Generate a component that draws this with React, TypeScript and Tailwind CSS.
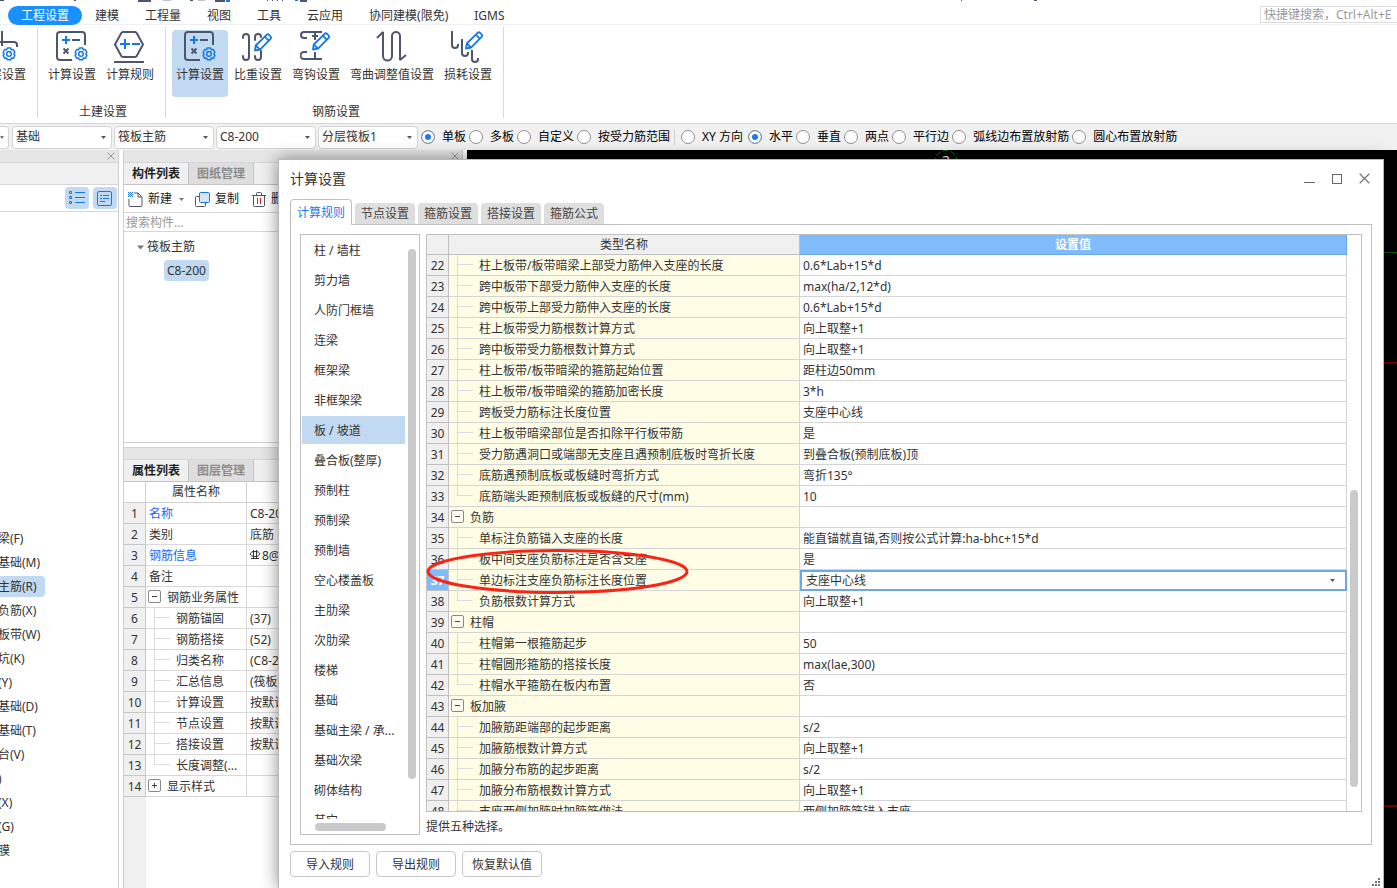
import { useState } from 'react';
import type { ReactNode } from 'react';
import clsx from 'clsx';

const INK = '#4d566b';
const BLUE = '#1677e8';

const menu = ['工程设置', '建模', '工程量', '视图', '工具', '云应用', '协同建模(限免)', 'IGMS'];

const selectors = [
  { label: '楼层', value: '基础' },
  { label: '构件类型', value: '筏板主筋' },
  { label: '构件', value: 'C8-200' },
  { label: '分层', value: '分层筏板1' },
];

const rangeModes = ['单板', '多板', '自定义', '按受力筋范围'];
const directionModes = ['XY 方向', '水平', '垂直', '两点', '平行边', '弧线边布置放射筋', '圆心布置放射筋'];

const navItems = [
  '梁(F)', '基础(M)', '主筋(R)', '负筋(X)', '板带(W)', '坑(K)', '(Y)',
  '基础(D)', '基础(T)', '台(V)', ')', '(X)', '(G)', '膜',
];

type Kind = 'plain' | 'link' | 'open' | 'closed' | 'child' | 'last';
type Row = { no: number; name: string; value?: string; kind: Kind };

const properties: Row[] = [
  { no: 1, name: '名称', value: 'C8-200', kind: 'link' },
  { no: 2, name: '类别', value: '底筋', kind: 'plain' },
  { no: 3, name: '钢筋信息', value: '8@200', kind: 'link' },
  { no: 4, name: '备注', kind: 'plain' },
  { no: 5, name: '钢筋业务属性', kind: 'open' },
  { no: 6, name: '钢筋锚固', value: '(37)', kind: 'child' },
  { no: 7, name: '钢筋搭接', value: '(52)', kind: 'child' },
  { no: 8, name: '归类名称', value: '(C8-200)', kind: 'child' },
  { no: 9, name: '汇总信息', value: '(筏板)', kind: 'child' },
  { no: 10, name: '计算设置', value: '按默认', kind: 'child' },
  { no: 11, name: '节点设置', value: '按默认', kind: 'child' },
  { no: 12, name: '搭接设置', value: '按默认', kind: 'child' },
  { no: 13, name: '长度调整(...', kind: 'last' },
  { no: 14, name: '显示样式', kind: 'closed' },
];

const dialogTabs = ['计算规则', '节点设置', '箍筋设置', '搭接设置', '箍筋公式'];

const categories = [
  '柱 / 墙柱', '剪力墙', '人防门框墙', '连梁', '框架梁', '非框架梁', '板 / 坡道', '叠合板(整厚)',
  '预制柱', '预制梁', '预制墙', '空心楼盖板', '主肋梁', '次肋梁', '楼梯', '基础',
  '基础主梁 / 承...', '基础次梁', '砌体结构', '其它',
];

const rules: Row[] = [
  { no: 22, name: '柱上板带/板带暗梁上部受力筋伸入支座的长度', value: '0.6*Lab+15*d', kind: 'child' },
  { no: 23, name: '跨中板带下部受力筋伸入支座的长度', value: 'max(ha/2,12*d)', kind: 'child' },
  { no: 24, name: '跨中板带上部受力筋伸入支座的长度', value: '0.6*Lab+15*d', kind: 'child' },
  { no: 25, name: '柱上板带受力筋根数计算方式', value: '向上取整+1', kind: 'child' },
  { no: 26, name: '跨中板带受力筋根数计算方式', value: '向上取整+1', kind: 'child' },
  { no: 27, name: '柱上板带/板带暗梁的箍筋起始位置', value: '距柱边50mm', kind: 'child' },
  { no: 28, name: '柱上板带/板带暗梁的箍筋加密长度', value: '3*h', kind: 'child' },
  { no: 29, name: '跨板受力筋标注长度位置', value: '支座中心线', kind: 'child' },
  { no: 30, name: '柱上板带暗梁部位是否扣除平行板带筋', value: '是', kind: 'child' },
  { no: 31, name: '受力筋遇洞口或端部无支座且遇预制底板时弯折长度', value: '到叠合板(预制底板)顶', kind: 'child' },
  { no: 32, name: '底筋遇预制底板或板缝时弯折方式', value: '弯折135°', kind: 'child' },
  { no: 33, name: '底筋端头距预制底板或板缝的尺寸(mm)', value: '10', kind: 'last' },
  { no: 34, name: '负筋', kind: 'open' },
  { no: 35, name: '单标注负筋锚入支座的长度', value: '能直锚就直锚,否则按公式计算:ha-bhc+15*d', kind: 'child' },
  { no: 36, name: '板中间支座负筋标注是否含支座', value: '是', kind: 'child' },
  { no: 37, name: '单边标注支座负筋标注长度位置', value: '支座中心线', kind: 'child' },
  { no: 38, name: '负筋根数计算方式', value: '向上取整+1', kind: 'last' },
  { no: 39, name: '柱帽', kind: 'open' },
  { no: 40, name: '柱帽第一根箍筋起步', value: '50', kind: 'child' },
  { no: 41, name: '柱帽圆形箍筋的搭接长度', value: 'max(lae,300)', kind: 'child' },
  { no: 42, name: '柱帽水平箍筋在板内布置', value: '否', kind: 'last' },
  { no: 43, name: '板加腋', kind: 'open' },
  { no: 44, name: '加腋筋距端部的起步距离', value: 's/2', kind: 'child' },
  { no: 45, name: '加腋筋根数计算方式', value: '向上取整+1', kind: 'child' },
  { no: 46, name: '加腋分布筋的起步距离', value: 's/2', kind: 'child' },
  { no: 47, name: '加腋分布筋根数计算方式', value: '向上取整+1', kind: 'child' },
  { no: 48, name: '支座两侧加腋时加腋筋做法', value: '两侧加腋筋锚入支座', kind: 'last' },
];

/* ---------- icons ---------- */

function Gear() {
  return (
    <g fill="none" stroke={BLUE}>
      <path
        strokeWidth="1.5"
        strokeLinejoin="round"
        d="M23.3 17h3.4l.7 1.7 1.9-.2 1.6 2.9-1.1 1.5 1.1 1.6-1.6 2.8-1.9-.2-.7 1.7h-3.4l-.7-1.7-1.9.2-1.6-2.8 1.1-1.6-1.1-1.5 1.6-2.9 1.9.2z"
      />
      <circle cx="25" cy="22.9" r="2.3" strokeWidth="1.5" />
    </g>
  );
}

function Pencil({ x, y }: { x: number; y: number }) {
  return (
    <g transform={`translate(${x} ${y})`} fill="#fff" fillOpacity="0.8" stroke={BLUE} strokeWidth="1.8" strokeLinejoin="round">
      <path d="M1 17.5l.8-5L12.6 1.8a1.8 1.8 0 0 1 2.5 0l1.5 1.500a1.8 1.8 0 0 1 0 2.5L6 16.7z" />
      <path d="M10.8 3.6l4 4M1.8 12.500L6 16.7" fill="none" />
    </g>
  );
}

function CalcIcon() {
  return (
    <svg width="32" height="32" viewBox="0 0 32 32" fill="none" stroke={INK} strokeWidth="2">
      <path d="M16 29H4a3 3 0 0 1-3-3V4a3 3 0 0 1 3-3h22a3 3 0 0 1 3 3v10" />
      <path d="M6 9h8M10 5v8" stroke={BLUE} />
      <path d="M16 9h8M7.5 17.5l5 5M12.5 17.5l-5 5" />
      <Gear />
    </svg>
  );
}

function FloorIcon() {
  return (
    <svg width="32" height="32" viewBox="2 0 32 32" fill="none" stroke={INK} strokeWidth="2">
      <path d="M18 0v15M4 15v-2a2 2 0 0 1 2-2h24a3 3 0 0 1 3 3v2" />
      <Gear />
    </svg>
  );
}

function RuleIcon() {
  return (
    <svg width="32" height="32" viewBox="0 0 32 32" fill="none" stroke={INK} strokeWidth="2">
      <path d="M9 1h12a2 2 0 0 1 1.7 1L29 13.5 22.7 25a2 2 0 0 1-1.7 1H9a2 2 0 0 1-1.7-1L1 13.5 7.3 2A2 2 0 0 1 9 1zM0 31h30" />
      <path d="M6 13h10M11 8v10M18 13h8" stroke={BLUE} />
    </svg>
  );
}

function WeightIcon() {
  return (
    <svg width="32" height="32" viewBox="0 0 32 32" fill="none" stroke={INK} strokeWidth="2" strokeLinecap="round">
      <path d="M1 7V6a3 3 0 0 1 6 0v20a3 3 0 0 1-6 0v-1" />
      <path d="M13 9V6a3 3 0 0 1 6 0M19 20v6a3 3 0 0 1-6 0v-1" />
      <Pencil x={12} y={2} />
    </svg>
  );
}

function HookIcon() {
  return (
    <svg width="32" height="32" viewBox="0 0 32 32" fill="none" stroke={INK} strokeWidth="2">
      <path d="M7 7H4a3 3 0 0 1 0-6h18M15 2v7M12 5h6" />
      <path d="M7 21H4a3 3 0 0 0 0 7h18M15 21v7" />
      <Pencil x={12} y={1} />
    </svg>
  );
}

function BendIcon() {
  return (
    <svg width="32" height="32" viewBox="0 0 32 32" fill="none" stroke={INK} strokeWidth="2" strokeLinejoin="bevel">
      <path d="M1 7l6-6v24a4.5 4.500 0 0 0 9 0V5a4 4 0 0 1 8 0v24l6-5" />
    </svg>
  );
}

function LossIcon() {
  return (
    <svg width="34" height="32" viewBox="0 0 34 32" fill="none" stroke={INK} strokeWidth="2">
      <path d="M1 0v14a3 3 0 0 0 6 0v-1M11 8v14a3 3 0 0 0 6 0v-1M21 19v9a3 3 0 0 0 6 0v-1" />
      <Pencil x={14} y={0} />
    </svg>
  );
}

function CloseMark({ size = 8, color = '#9a9a9a' }: { size?: number; color?: string }) {
  return (
    <svg width={size} height={size} viewBox="0 0 8 8" stroke={color} fill="none">
      <path d="M.5.5l7 7M7.5.5l-7 7" strokeWidth={size > 8 ? 0.9 : 1} />
    </svg>
  );
}

function Caret({ color = INK, size = 5 }: { color?: string; size?: number }) {
  return (
    <svg width={size} height={size - 2} viewBox="0 0 5 3" fill={color}>
      <path d="M0 0h5L2.5 3z" />
    </svg>
  );
}

/* ---------- shared parts ---------- */

function RibbonButton({ label, icon, active, clipped }: { label: string; icon: ReactNode; active?: boolean; clipped?: boolean }) {
  return (
    <button
      type="button"
      className={clsx(
        'flex h-[67px] shrink-0 flex-col items-center rounded-sm px-1',
        active && 'bg-[#c2d9f2]',
        clipped && 'w-14',
      )}
    >
      <span className="flex h-[34px] items-center">{icon}</span>
      <span className={clsx('leading-[22px] whitespace-nowrap', clipped && 'self-end')}>{label}</span>
    </button>
  );
}

function RibbonGroup({ title, children }: { title: string; children?: ReactNode }) {
  return (
    <section className="flex flex-col items-center border-r border-[#d9d9d9] pr-[7px] pl-[6px]">
      <div className="flex gap-[2px] pt-[3px]">{children}</div>
      <h2 className="pl-1 leading-[30px]">{title}</h2>
    </section>
  );
}

function ToolSelect({ label, value }: { label: string; value: string }) {
  return (
    <label className="relative block h-[23px] w-[100px] shrink-0">
      <select
        aria-label={label}
        className="h-full w-full appearance-none rounded-sm border border-[#d4d4d4] bg-white pl-[3px] text-[#333]"
      >
        <option>{value}</option>
      </select>
      <span className="pointer-events-none absolute top-[10px] right-[6px]">
        <Caret />
      </span>
    </label>
  );
}

function ModeRadios({ name, items, initial }: { name: string; items: string[]; initial: string }) {
  const [value, setValue] = useState(initial);
  return (
    <div className="flex gap-[3px]">
      {items.map((item) => (
        <label
          key={item}
          className={clsx('flex items-center gap-[7px] whitespace-nowrap text-black', item.startsWith('XY') && 'w-16')}
        >
          <input
            type="radio"
            name={name}
            checked={value === item}
            onChange={() => setValue(item)}
            className="h-[14px] w-[14px] shrink-0 appearance-none rounded-full border border-[#8f8f8f] bg-white checked:bg-[#1f7ae8] checked:shadow-[inset_0_0_0_3px_#fff]"
          />
          {item}
        </label>
      ))}
    </div>
  );
}

function PanelTabs({ items }: { items: string[] }) {
  return (
    <div className="flex h-[22px] shrink-0 border-b border-[#c4c4c4] bg-[#f0f0f0] font-bold">
      {items.map((item, i) => (
        <button
          key={item}
          type="button"
          className={clsx(
            'w-[65px] border-r border-[#c4c4c4] leading-[21px]',
            i === 0 ? 'text-[#222]' : 'bg-[#dedede] text-[#8c8c8c]',
          )}
        >
          {item}
        </button>
      ))}
    </div>
  );
}

function TreeLabel({ row }: { row: Row }) {
  if (row.kind === 'open' || row.kind === 'closed') {
    return (
      <div className="flex h-5 gap-[6px] pl-[2px]">
        <button
          type="button"
          aria-label={row.name}
          className="mt-[3px] flex h-[13px] w-[13px] items-center justify-center rounded-[2px] border border-[#888] bg-white/60"
        >
          <svg width="5" height="5" viewBox="0 0 5 5" stroke="#444">
            <path d={row.kind === 'open' ? 'M0 2.500h5' : 'M0 2.500h5M2.500 0v5'} />
          </svg>
        </button>
        <span className="pt-[2px] leading-[18px]">{row.name}</span>
      </div>
    );
  }
  if (row.kind === 'child' || row.kind === 'last') {
    return (
      <div className="flex h-5 gap-[6px] pl-2">
        <span className={clsx('w-[16px] border-[#dcdcdc]', row.kind === 'child' && 'border-l')}>
          <span className={clsx('block h-[10px] border-b border-[#dcdcdc]', row.kind === 'last' && 'border-l')} />
        </span>
        <span className="pt-[2px] leading-[18px]">{row.name}</span>
      </div>
    );
  }
  return <div className={clsx('pt-[2px] pl-[3px] leading-[18px]', row.kind === 'link' && 'text-[#1463ff]')}>{row.name}</div>;
}

/* ---------- page sections ---------- */

function TopBar() {
  return (
    <header className="relative flex h-[25px] shrink-0 items-end justify-between border-b border-[#f0f0f0] pl-2">
      <svg className="absolute top-0 left-0" width="1040" height="2" viewBox="0 0 1040 2" fill={INK}>
        <path d="M0 0h4v1H0zM74 0h2v1h-2zM138 0h13v2h-13zM190 0h3v1h-3zM215 0h10v2h-10zM267 0h1v1h-1zM272 0h1v1h-1zM277 0h1v1h-1zM282 0h1v1h-1zM300 0h7v2h-7zM961 0h1v1h-1zM1034 0h3v1h-3z" />
        <path d="M163 0h8v1h-8zM198 0h7v1h-7z" fill="#c4c4c4" />
        <path d="M226 0h4v2h-4zM295 0h3v1h-3z" fill={BLUE} />
      </svg>
      <nav className="-mb-px flex">
        {menu.map((item, i) => (
          <a
            key={item}
            href="#"
            className={clsx('h-[19px] rounded-full px-[13px] leading-[19px] whitespace-nowrap', i === 0 && 'bg-[#1890ff] text-white')}
          >
            {item}
          </a>
        ))}
      </nav>
      <input
        type="text"
        aria-label="快捷键搜索"
        placeholder="快捷键搜索，Ctrl+Alt+E"
        className="mb-[1px] h-[17px] w-[137px] border border-r-0 border-[#dcdcdc] pl-[3px] placeholder:text-[#9a9a9a]"
      />
    </header>
  );
}

function Ribbon() {
  return (
    <div className="flex h-[99px] shrink-0 border-b border-[#d6d6d6] pt-[2px] pb-[5px]">
      <section className="flex w-[38px] shrink-0 justify-end overflow-hidden border-r border-[#d9d9d9] pt-[3px] pr-[7px]">
        <RibbonButton label="层设置" icon={<FloorIcon />} clipped />
      </section>
      <RibbonGroup title="土建设置">
        <RibbonButton label="计算设置" icon={<CalcIcon />} />
        <RibbonButton label="计算规则" icon={<RuleIcon />} />
      </RibbonGroup>
      <RibbonGroup title="钢筋设置">
        <RibbonButton label="计算设置" icon={<CalcIcon />} active />
        <RibbonButton label="比重设置" icon={<WeightIcon />} />
        <RibbonButton label="弯钩设置" icon={<HookIcon />} />
        <RibbonButton label="弯曲调整值设置" icon={<BendIcon />} />
        <RibbonButton label="损耗设置" icon={<LossIcon />} />
      </RibbonGroup>
    </div>
  );
}

function ModeBar() {
  return (
    <div className="flex h-[26px] shrink-0 items-center bg-[#f1f1f1]">
      <div className="mr-[3px] flex h-[23px] w-[9px] items-center justify-end rounded-r-sm border border-l-0 border-[#d4d4d4] bg-white pr-1">
        <Caret />
      </div>
      <div className="mr-[3px] flex gap-[2px]">
        {selectors.map((s) => (
          <ToolSelect key={s.label} {...s} />
        ))}
      </div>
      <ModeRadios name="range" items={rangeModes} initial="单板" />
      <div className="mr-[6px] ml-1 h-4 w-px bg-[#d0d0d0]" />
      <ModeRadios name="direction" items={directionModes} initial="水平" />
    </div>
  );
}

function NavPanel() {
  return (
    <aside className="flex w-[119px] shrink-0 flex-col overflow-hidden border-r border-[#cfcfcf]">
      <div className="flex h-[13px] shrink-0 items-center justify-end border-b border-[#d6d6d6] bg-[#e6e6e6] pr-[3px]">
        <CloseMark />
      </div>
      <div className="h-[22px] shrink-0 border-b border-[#d6d6d6] bg-[#f1f1f1]" />
      <div className="flex h-[27px] shrink-0 items-center justify-end gap-1 border-b border-[#d6d6d6] pr-[1px]">
        <button type="button" aria-label="列表" className="flex h-[22px] w-6 items-center justify-center rounded-sm bg-[#c2d9f2]">
          <svg width="16" height="14" viewBox="0 0 16 14" fill="none" stroke={BLUE}>
            <path d="M.5.5h2v2h-2zM.5 5.500h2v2h-2zM.5 10.500h2v2h-2zM6 1.500h10M6 6.500h10M6 11.500h10" />
          </svg>
        </button>
        <button type="button" aria-label="详情" className="flex h-[22px] w-6 items-center justify-center rounded-sm bg-[#c2d9f2]">
          <svg width="16" height="15" viewBox="0 0 16 15" fill="none" stroke={BLUE}>
            <rect x=".5" y=".5" width="14" height="14" rx="1.500" />
            <path d="M3 4.500h2M6 4.500h6M3 7.500h2M6 7.500h6M3 10.500h5" />
          </svg>
        </button>
      </div>
      <ul className="-ml-[2px] pt-[314px]">
        {navItems.map((item) => (
          <li key={item} className="flex h-6 items-center whitespace-nowrap">
            <a href="#" className={clsx('h-[21px] rounded-sm pr-2 leading-[21px]', item === '主筋(R)' && 'bg-[#c2d9f2]')}>
              {item}
            </a>
          </li>
        ))}
      </ul>
    </aside>
  );
}

function ComponentPanel() {
  return (
    <div className="ml-1 flex w-[340px] shrink-0 flex-col border-x border-[#cfcfcf]">
      <div className="flex h-[13px] shrink-0 items-center justify-end border-b border-[#d6d6d6] bg-[#e6e6e6] pr-[3px]">
        <CloseMark />
      </div>
      <PanelTabs items={['构件列表', '图纸管理']} />
      <div className="flex h-7 shrink-0 items-center border-b border-[#d6d6d6] pt-[1px] pl-1 text-[#222]">
        <button type="button" className="flex items-center gap-[5px]">
          <svg width="15" height="15" viewBox="0 0 15 15" fill="none" stroke={INK}>
            <path d="M6 1h4l4 4v8.500a1 1 0 0 1-1 1H2a1 1 0 0 1-1-1V7M10 1v4h4" />
            <path d="M0 0h1v1H0zM2 0h1v1H2zM4 0h1v1H4zM1 1h1v1H1zM3 1h1v1H3zM0 2h1v1H0zM2 2h1v1H2zM4 2h1v1H4zM1 3h1v1H1zM3 3h1v1H3zM0 4h1v1H0zM2 4h1v1H2zM4 4h1v1H4z" fill={BLUE} stroke="none" />
          </svg>
          新建
        </button>
        <span className="mr-[11px] ml-[7px]">
          <Caret color="#777" />
        </span>
        <button type="button" className="flex items-center gap-[5px]">
          <svg width="15" height="15" viewBox="0 0 15 15" fill="none">
            <path d="M4 4.500H1.500a1 1 0 0 0-1 1v8a1 1 0 0 0 1 1h8a1 1 0 0 0 1-1V11" stroke={INK} />
            <rect x="4.500" y=".5" width="10" height="10" rx="1" stroke={BLUE} fill="#d5e6fb" />
          </svg>
          复制
        </button>
        <button type="button" className="ml-[13px] flex items-center gap-[5px]">
          <svg width="14" height="15" viewBox="0 0 14 15" fill="none" stroke={INK}>
            <path d="M0 3.500h14M4.500 3V1.500a1 1 0 0 1 1-1h3a1 1 0 0 1 1 1V3M1.500 3.500v10a1 1 0 0 0 1 1h9a1 1 0 0 0 1-1v-10" />
            <path d="M5.500 6v6M8.500 6v6" stroke="#e02020" />
          </svg>
          删
        </button>
      </div>
      <input
        type="text"
        aria-label="搜索构件"
        placeholder="搜索构件..."
        className="h-[19px] shrink-0 border-b border-[#d6d6d6] pl-[2px] placeholder:text-[#9a9a9a]"
      />
      <div className="h-[211px] shrink-0 border-b border-[#cfcfcf] pt-[3px]">
        <div className="flex h-6 items-center gap-[3px] pl-[13px]">
          <Caret color="#777" size={7} />
          筏板主筋
        </div>
        <div className="flex h-[23px] items-center pl-10">
          <span className="h-[21px] rounded-sm bg-[#c2d9f2] px-[3px] leading-[21px]">C8-200</span>
        </div>
      </div>
      <div className="mt-1 h-[13px] shrink-0 border-y border-[#d6d6d6] bg-[#e6e6e6]" />
      <PanelTabs items={['属性列表', '图层管理']} />
      <div className="flex min-h-0 flex-1 flex-col">
        <table className="w-full table-fixed border-separate border-spacing-0 leading-[18px]">
          <colgroup>
            <col className="w-[22px]" />
            <col className="w-[101px]" />
            <col />
          </colgroup>
          <thead>
            <tr className="h-[21px]">
              <th className="border-r border-b border-[#d0d0d0] p-0" />
              <th className="border-r border-b border-[#d0d0d0] p-0 font-normal">属性名称</th>
              <th className="border-b border-[#d0d0d0] p-0" />
            </tr>
          </thead>
          <tbody>
            {properties.map((row) => (
              <tr key={row.no} className="h-[21px]">
                <td className="border-r border-b border-[#c8c8c8] bg-[#f0f0f0] p-0 pt-[2px] text-center">{row.no}</td>
                <td className="border-r border-b border-[#d8d8d8] p-0 whitespace-nowrap">
                  <TreeLabel row={row} />
                </td>
                <td className="border-b border-[#d8d8d8] p-0 pt-[2px] pl-[3px] whitespace-nowrap">
                  {row.no === 3 && (
                    <svg className="mr-[2px] inline-block align-baseline" width="10" height="10" viewBox="0 0 10 10" fill="none" stroke="#333">
                      <path d="M3.500 0v9M6.500 0v9M1 8.500h8" />
                      <ellipse cx="5" cy="4" rx="4.500" ry="2.500" />
                    </svg>
                  )}
                  {row.value}
                </td>
              </tr>
            ))}
          </tbody>
        </table>
        <div className="w-[22px] flex-1 bg-[#f0f0f0]" />
      </div>
    </div>
  );
}

function DrawingCanvas() {
  return (
    <div className="relative ml-1 flex-1 bg-black">
      <svg className="absolute top-0 left-[466px]" width="26" height="24" viewBox="0 0 26 24">
        <circle cx="13" cy="11.500" r="11" fill="none" stroke="#0a7d12" strokeDasharray="6 2" />
        <text x="13" y="16" textAnchor="middle" fill="#fff" fontSize="14">2</text>
      </svg>
      <div className="absolute top-[102px] right-0 h-px w-[13px] bg-[#005c00]" />
      <div className="absolute top-[212px] right-0 h-px w-[13px] bg-[#8a0000]" />
      <div className="absolute top-[655px] right-0 h-[2px] w-[13px] bg-[#6e0000]" />
    </div>
  );
}

function RuleTable() {
  return (
    <div className="relative flex min-h-0 flex-1">
      <div className="flex flex-1 overflow-hidden border border-[#c0c0c0]">
        <div className="flex-1">
          <table className="w-full table-fixed border-separate border-spacing-0 leading-[18px]">
            <colgroup>
              <col className="w-[22px]" />
              <col className="w-[351px]" />
              <col />
            </colgroup>
            <thead>
              <tr className="h-5">
                <th className="border-r border-b border-[#c0c0c0] bg-[#f0f0f0] p-0" />
                <th className="border-r border-b border-[#c0c0c0] bg-[#f0f0f0] p-0 pt-[1px] font-normal">类型名称</th>
                <th className="border-r border-b border-[#69a8ea] bg-[#80bbfc] p-0 pt-[1px] font-bold text-white">设置值</th>
              </tr>
            </thead>
            <tbody>
              {rules.map((row) => {
                const current = row.no === 37;
                return (
                  <tr key={row.no} className="h-[21px]">
                    <td
                      className={clsx(
                        'border-r border-b border-[#c0c0c0] p-0 pt-[2px] text-center',
                        current ? 'bg-[#80bbfc] font-bold text-white' : 'bg-[#f0f0f0]',
                      )}
                    >
                      {row.no}
                    </td>
                    <td className="border-r border-b border-[#d4d4d4] bg-[#fffde6] p-0 whitespace-nowrap">
                      <TreeLabel row={row} />
                    </td>
                    {current ? (
                      <td className="relative p-0">
                        <select
                          aria-label={row.name}
                          className="block h-[21px] w-full appearance-none border-2 border-[#69a8ea] bg-white pl-1"
                        >
                          <option>{row.value}</option>
                        </select>
                        <span className="pointer-events-none absolute top-[9px] right-3 leading-none">
                          <Caret />
                        </span>
                      </td>
                    ) : (
                      <td className="border-r border-b border-[#d4d4d4] p-0 pt-[2px] pl-[3px] whitespace-nowrap">{row.value}</td>
                    )}
                  </tr>
                );
              })}
            </tbody>
          </table>
        </div>
        <div className="w-[14px] pt-[255px] pl-[3px]">
          <div className="h-[297px] w-2 rounded-full bg-[#cacaca]" />
        </div>
      </div>
      {/* hand-drawn mark around rows 36 and 37 */}
      <svg className="pointer-events-none absolute top-[314px] left-0" width="264" height="48" viewBox="0 0 264 48">
        <ellipse cx="131.500" cy="23.500" rx="129.500" ry="21" fill="none" stroke="#fb2314" strokeWidth="3" />
      </svg>
    </div>
  );
}

function SettingsDialog() {
  return (
    <div
      role="dialog"
      aria-label="计算设置"
      className="absolute top-[159px] right-[13px] bottom-0 left-[278px] flex flex-col border border-b-0 border-[#b8b8b8] bg-white shadow-[0_0_16px_rgba(0,0,0,0.45)]"
    >
      <div className="flex h-[39px] shrink-0 items-center justify-between px-[11px] pb-[2px]">
        <h1 className="text-sm">计算设置</h1>
        <div className="flex items-center gap-[17px] pr-[2px]">
          <button type="button" aria-label="最小化" className="flex h-[11px] w-[11px] items-end">
            <span className="mb-[1px] h-px w-full bg-[#666]" />
          </button>
          <button type="button" aria-label="最大化" className="h-[10px] w-[10px] border border-[#666]" />
          <button type="button" aria-label="关闭">
            <CloseMark size={11} color="#777" />
          </button>
        </div>
      </div>
      <div className="mx-[11px] -mb-px flex h-[26px] shrink-0 items-end gap-[3px]">
        {dialogTabs.map((tab, i) => (
          <button
            key={tab}
            type="button"
            className={clsx(
              i === 0
                ? 'z-10 h-[26px] w-[62px] rounded-t border border-b-0 border-[#c0c0c0] bg-white text-[#1f7ae8]'
                : 'mb-[1px] h-[21px] w-[60px] rounded-t-sm bg-[#dedede] text-[#444]',
            )}
          >
            {tab}
          </button>
        ))}
      </div>
      <div className="mx-[11px] flex min-h-0 flex-1 gap-[6px] border border-[#c0c0c0] p-[9px]">
        <div className="flex w-[120px] shrink-0 flex-col border border-[#c0c0c0]">
          <div className="flex min-h-0 flex-1 overflow-hidden pt-[1px] pl-[1px]">
            <ul className="w-[103px] space-y-[2px]">
              {categories.map((item) => (
                <li key={item}>
                  <a
                    href="#"
                    className={clsx('block h-7 pl-3 leading-[30px] whitespace-nowrap', item === '板 / 坡道' && 'bg-[#c2d9f2]')}
                  >
                    {item}
                  </a>
                </li>
              ))}
            </ul>
            <div className="mt-[13px] ml-[3px] h-[530px] w-2 rounded-full bg-[#cacaca]" />
          </div>
          <div className="h-[15px] shrink-0 pt-1 pl-[14px]">
            <div className="h-2 w-[71px] rounded-full bg-[#cacaca]" />
          </div>
        </div>
        <div className="flex min-w-0 flex-1 flex-col">
          <RuleTable />
          <p className="h-[23px] shrink-0 leading-[30px]">提供五种选择。</p>
        </div>
      </div>
      <div className="flex h-[43px] shrink-0 justify-between pt-[6px] pl-[11px]">
        <div className="flex gap-[6px]">
          {['导入规则', '导出规则', '恢复默认值'].map((label) => (
            <button key={label} type="button" className="h-[26px] w-20 rounded-sm border border-[#c8c8c8] bg-white pt-[1px]">
              {label}
            </button>
          ))}
        </div>
        <svg className="mr-[3px] mb-[2px] self-end" width="8" height="8" viewBox="0 0 8 8" fill="#70757f">
          <path d="M6 0h2v2H6zM3 3h2v2H3zM6 3h2v2H6zM0 6h2v2H0zM3 6h2v2H3zM6 6h2v2H6z" />
        </svg>
      </div>
    </div>
  );
}

export default function App() {
  return (
    <div className="relative flex h-screen flex-col overflow-hidden bg-white font-['Noto_Sans','Noto_Sans_CJK_SC',sans-serif] text-[12px] text-[#333]">
      <TopBar />
      <Ribbon />
      <ModeBar />
      <main className="flex min-h-0 flex-1">
        <NavPanel />
        <ComponentPanel />
        <DrawingCanvas />
      </main>
      <SettingsDialog />
    </div>
  );
}
